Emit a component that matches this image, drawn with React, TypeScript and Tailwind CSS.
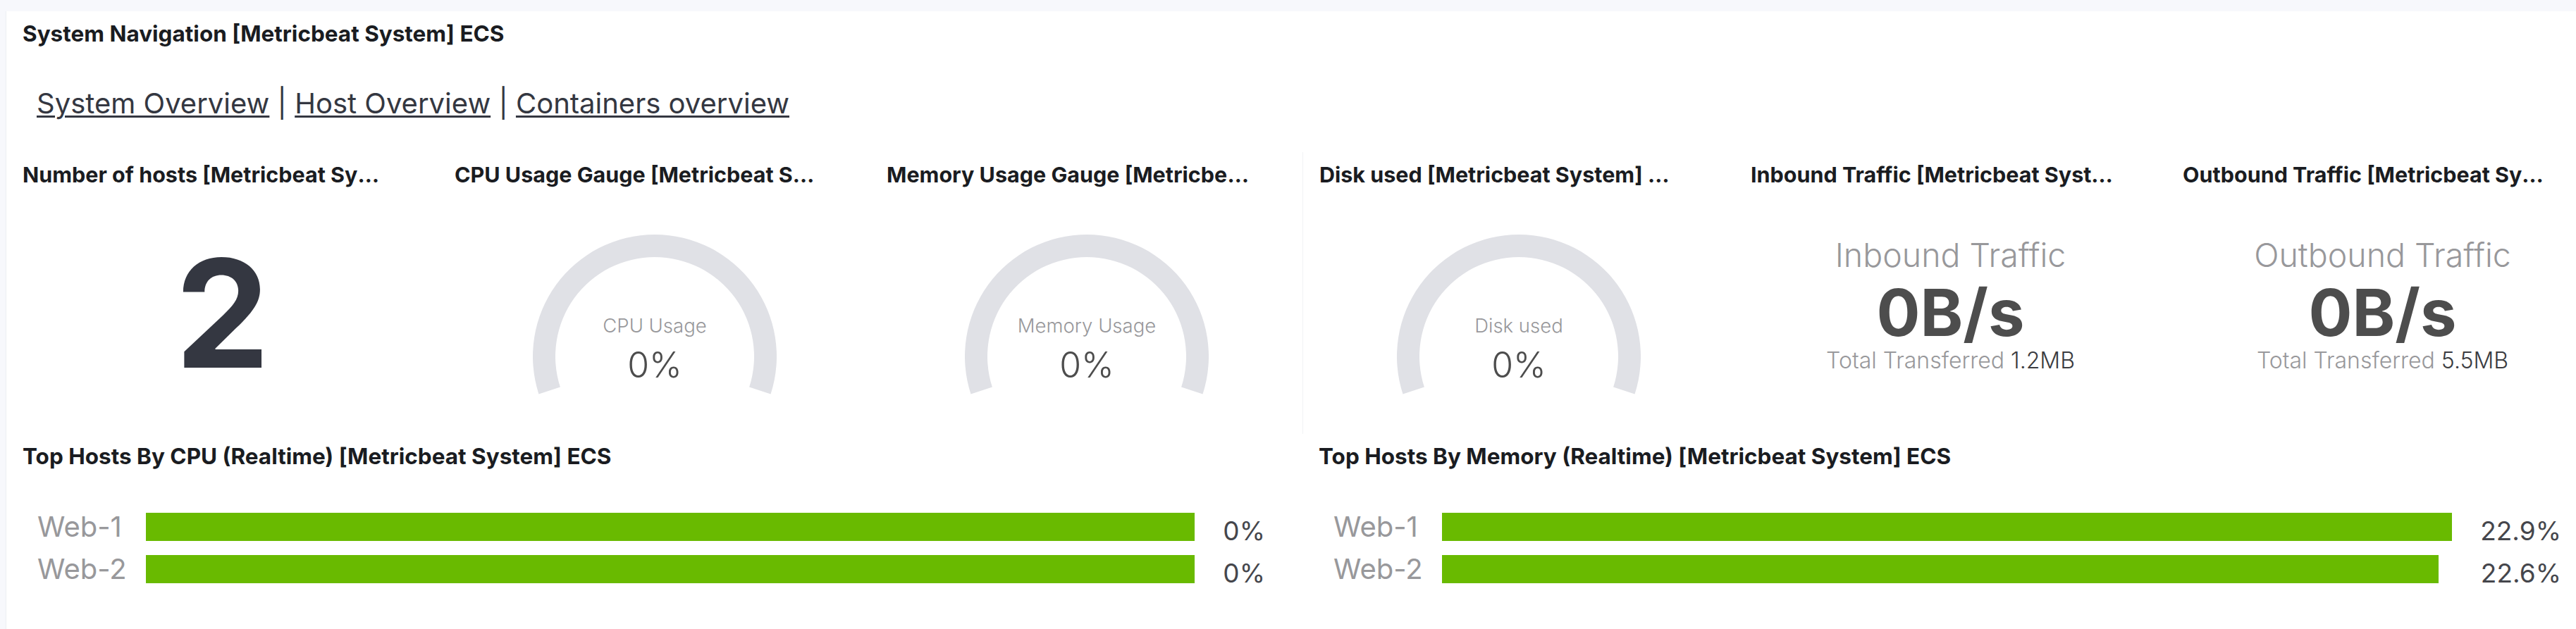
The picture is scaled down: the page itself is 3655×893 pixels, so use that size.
import React from "react";

const FONT = "font-['Inter','Noto_Sans',sans-serif]";

function Title({ children, full }: { children: React.ReactNode; full?: boolean }) {
  return (
    <div className={full ? "pt-[13px] pl-[23px]" : "pt-[13px] pl-[23px] pr-[75px]"}>
      <h2
        className={
          "truncate leading-[38px] font-bold text-[#1a1c21] " + (full ? "text-[31.5px]" : "text-[30.5px]")
        }
      >
        {children}
      </h2>
    </div>
  );
}

const ARC =
  "M 15.47 233.46 A 173 173 0 1 1 344.53 233.46 L 314.10 223.57 A 141 141 0 1 0 45.90 223.57 Z";

function Gauge({ label }: { label: string }) {
  return (
    <svg width="360" height="250" viewBox="0 0 360 250" className="mx-auto mt-[59px] block">
      <path d={ARC} fill="#e0e1e6" />
      <text
        x="180"
        y="146"
        textAnchor="middle"
        fontSize="27.5"
        fontWeight="300"
        fill="#98989b"
        fontFamily="Inter, sans-serif"
      >
        {label}
      </text>
      <text
        x="180"
        y="210"
        textAnchor="middle"
        fontSize="50"
        fontWeight="300"
        fill="#4d4d4d"
        fontFamily="Inter, sans-serif"
      >
        0%
      </text>
    </svg>
  );
}

function Traffic({ label, total }: { label: string; total: string }) {
  return (
    <div className="mt-[72px] flex flex-col items-center">
      <div className="text-[46.5px] leading-none font-light text-[#98989b]">{label}</div>
      <div className="mt-[12px] text-[92px] leading-none font-bold text-[#4d4d4d]">0B/s</div>
      <div className="mt-[6px] text-[32px] leading-none font-light text-[#98989b]">
        Total Transferred <span className="text-[#3a3b40]">{total}</span>
      </div>
    </div>
  );
}

function Panel({
  title,
  children,
  className = "",
}: {
  title: string;
  children?: React.ReactNode;
  className?: string;
}) {
  return (
    <section className={"w-[613px] h-[400px] bg-white flex flex-col shrink-0 " + className}>
      <Title>{title}</Title>
      <div className="flex-1 flex flex-col">{children}</div>
    </section>
  );
}

type Row = { name: string; value: string; pct: number };

function TopHosts({ title, rows, className = "" }: { title: string; rows: Row[]; className?: string }) {
  return (
    <section className={"w-[1839px] h-[277px] bg-white flex flex-col shrink-0 " + className}>
      <Title full>{title}</Title>
      <div className="mt-[61px] pl-[44px] pr-[53px] grid grid-cols-[154px_1fr_auto] gap-y-[20px]">
        {rows.map((r) => (
          <React.Fragment key={r.name}>
            <div className="h-[40px] flex items-center text-[40px] leading-none text-[#98989b]">{r.name}</div>
            <div className="h-[40px]">
              <div className="h-[40px] bg-[#69ba00]" style={{ width: `${r.pct}%` }} />
            </div>
            <div className="h-[40px] pl-[40px] pt-[10px] flex items-center justify-end text-[37px] leading-none text-[#45464c]">
              {r.value}
            </div>
          </React.Fragment>
        ))}
      </div>
    </section>
  );
}

export default function App() {
  return (
    <div className={"w-[3655px] h-[893px] overflow-hidden bg-[#f7f8fc] " + FONT}>
      <div className="pt-[16px] pl-[8px] w-[3687px]">
        <div className="border-l border-[#eceef3] flex flex-col">
          {/* Row 1: navigation */}
          <section className="h-[200px] bg-white flex flex-col">
            <Title full>System Navigation [Metricbeat System] ECS</Title>
            <div className="mt-[60px] pl-[43px] text-[40px] leading-none text-[#343741] flex items-baseline whitespace-pre">
              <span className="underline decoration-[3px] underline-offset-[3px]">System Overview</span>
              <span> | </span>
              <span className="underline decoration-[3px] underline-offset-[3px]">Host Overview</span>
              <span> | </span>
              <span className="underline decoration-[3px] underline-offset-[3px]">Containers overview</span>
            </div>
          </section>

          {/* Row 2: metrics */}
          <div className="flex">
            <Panel title="Number of hosts [Metricbeat System] ECS">
              <div className="mt-[71px] text-center text-[213px] leading-none font-bold text-[#343741]">2</div>
            </Panel>
            <Panel title="CPU Usage Gauge [Metricbeat System] ECS">
              <Gauge label="CPU Usage" />
            </Panel>
            <Panel title="Memory Usage Gauge [Metricbeat System] ECS">
              <Gauge label="Memory Usage" />
            </Panel>
            <Panel title="Disk used [Metricbeat System] ECS" className="border-l border-[#f1f2f5]">
              <Gauge label="Disk used" />
            </Panel>
            <Panel title="Inbound Traffic [Metricbeat System] ECS">
              <Traffic label="Inbound Traffic" total="1.2MB" />
            </Panel>
            <Panel title="Outbound Traffic [Metricbeat System] ECS">
              <Traffic label="Outbound Traffic" total="5.5MB" />
            </Panel>
          </div>

          {/* Row 3: top hosts */}
          <div className="flex">
            <TopHosts
              title="Top Hosts By CPU (Realtime) [Metricbeat System] ECS"
              rows={[
                { name: "Web-1", value: "0%", pct: 100 },
                { name: "Web-2", value: "0%", pct: 100 },
              ]}
            />
            <TopHosts
              title="Top Hosts By Memory (Realtime) [Metricbeat System] ECS"
              rows={[
                { name: "Web-1", value: "22.9%", pct: 100 },
                { name: "Web-2", value: "22.6%", pct: (22.6 / 22.9) * 100 },
              ]}
            />
          </div>
        </div>
      </div>
    </div>
  );
}
